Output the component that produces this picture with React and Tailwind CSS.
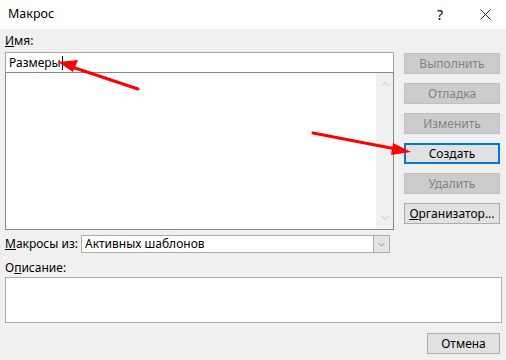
import { ChevronDown, ChevronUp } from "lucide-react";

const font = "font-['Segoe_UI','Noto_Sans',sans-serif]";

const DialogButton = ({ children, disabled, focused }) => {
  let cls = "h-[21px] w-[96px] flex items-center justify-center text-[12px] border ";
  if (focused) cls += "border-2 border-[#0078d7] bg-[#e1e1e1] text-black";
  else if (disabled) cls += "border-[#bfbfbf] bg-[#cccccc] text-[#838383]";
  else cls += "border-[#adadad] bg-[#e1e1e1] text-black";
  return <div className={cls}>{children}</div>;
};

const App = () => {
  return (
    <div className={`relative w-[506px] h-[360px] bg-[#f0f0f0] overflow-hidden ${font} text-[12px] text-black`}>
      {/* title bar */}
      <div className="h-[29px] bg-white flex items-center pl-[8px]">
        <span className="text-[12.5px] flex-1">Макрос</span>
        <span className="w-[48px] text-[14px] text-center">?</span>
        <span className="w-[42px] flex justify-center">
          <svg width="11" height="11" viewBox="0 0 11 11">
            <path d="M0.5 0.5 L10.5 10.5 M10.5 0.5 L0.5 10.5" stroke="#222" strokeWidth="1" />
          </svg>
        </span>
      </div>

      {/* body */}
      <div className="flex pl-[5px]">
        <div className="w-[389px] flex flex-col">
          <div className="h-[23px] pt-[4px] leading-[16px]">
            <span className="underline">И</span>мя:
          </div>
          <div className="h-[20px] bg-white border border-[#a8a8a8] border-b-0 flex items-center pl-[3px]">
            Размеры<span className="inline-block w-[1px] h-[14px] bg-black ml-[1px]" />
          </div>
          <div className="h-[158px] bg-white border border-[#828790] flex">
            <div className="flex-1" />
            <div className="w-[17px] bg-[#f0f0f0] flex flex-col justify-between items-center py-[5px]">
              <ChevronUp size={12} color="#c0c0c0" strokeWidth={2} />
              <ChevronDown size={12} color="#c0c0c0" strokeWidth={2} />
            </div>
          </div>
        </div>

        <div className="ml-[10px] pt-[24px] flex flex-col gap-[9px]">
          <DialogButton disabled>Выполнить</DialogButton>
          <DialogButton disabled>Отладка</DialogButton>
          <DialogButton disabled>Изменить</DialogButton>
          <DialogButton focused>
            Соз<span className="underline">д</span>ать
          </DialogButton>
          <DialogButton disabled>Удалить</DialogButton>
          <DialogButton>
            <span className="underline">О</span>рганизатор...
          </DialogButton>
        </div>
      </div>

      {/* macros from */}
      <div className="flex items-center pl-[5px] mt-[5px] h-[18px]">
        <span className="w-[76px]">
          <span className="underline">М</span>акросы из:
        </span>
        <div className="w-[309px] h-[18px] bg-white border border-[#adadad] flex items-center">
          <span className="flex-1 pl-[3px]">Активных шаблонов</span>
          <div className="w-[16px] h-full bg-[#e5e5e5] border-l border-[#adadad] flex items-center justify-center">
            <ChevronDown size={11} color="#606060" strokeWidth={1.5} />
          </div>
        </div>
      </div>

      {/* description */}
      <div className="pl-[5px] mt-[7px] leading-[16px]">
        О<span className="underline">п</span>исание:
      </div>
      <div className="ml-[5px] mt-[1px] w-[497px] h-[46px] bg-white border border-[#adadad]" />

      <div className="flex justify-end pr-[6px] mt-[10px]">
        <div className="h-[21px] w-[73px] flex items-center justify-center border border-[#adadad] bg-[#e1e1e1]">
          Отмена
        </div>
      </div>

      {/* red arrows overlay */}
      <svg className="absolute inset-0 pointer-events-none" width="506" height="360">
        <line x1="138" y1="89" x2="72" y2="67" stroke="#ff0000" strokeWidth="3" strokeLinecap="round" />
        <polygon points="58,62 78,60 73,72" fill="#ff0000" />
        <line x1="313" y1="133" x2="396" y2="149" stroke="#ff0000" strokeWidth="3" strokeLinecap="round" />
        <polygon points="411,152 393,143 391,155" fill="#ff0000" />
      </svg>
    </div>
  );
};

export default App;
